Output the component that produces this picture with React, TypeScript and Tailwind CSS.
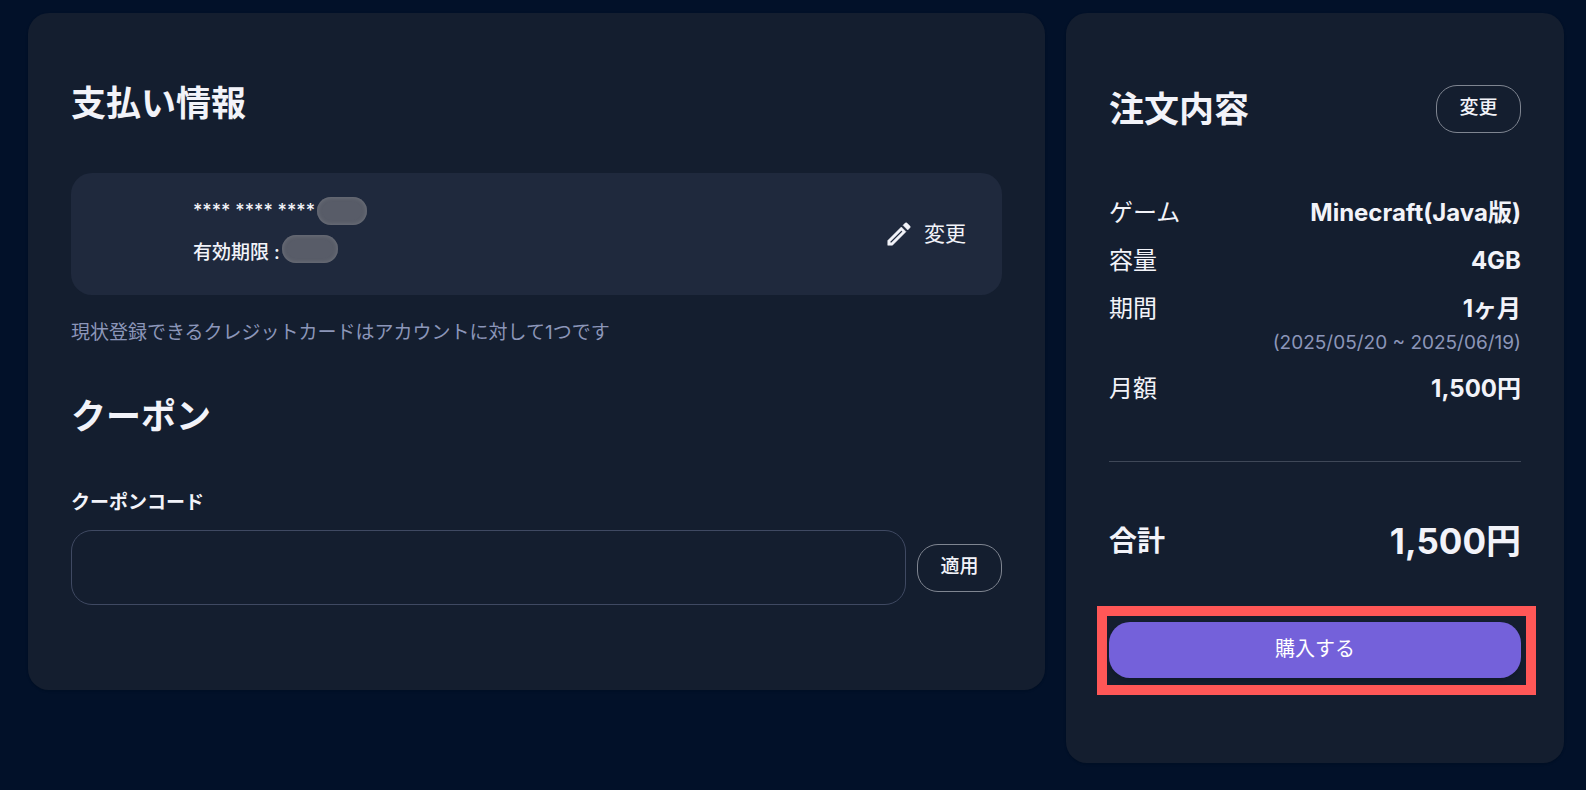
import React from 'react';

interface OrderLine {
  label: string;
  value: string;
  note?: string;
}

const ORDER_LINES: OrderLine[] = [
  { label: 'ゲーム', value: 'Minecraft(Java版)' },
  { label: '容量', value: '4GB' },
  { label: '期間', value: '1ヶ月', note: '(2025/05/20 ~ 2025/06/19)' },
  { label: '月額', value: '1,500円' },
];

function PencilIcon() {
  return (
    <svg
      viewBox="0 0 24 24"
      aria-hidden="true"
      className="size-[30px]"
      fill="currentColor"
      stroke="currentColor"
      strokeWidth="0.4"
    >
      <path d="M3 17.25V21h3.75L17.6 10.15 13.85 6.4 3 17.25ZM5.92 19H5v-.92l8.85-8.85.92.92L5.92 19Z" />
      <path d="M20.71 5.63 18.37 3.29a1 1 0 0 0-1.41 0l-1.75 1.75 3.75 3.75 1.75-1.75a1 1 0 0 0 0-1.41Z" />
    </svg>
  );
}

function OutlineButton({ children }: { children: React.ReactNode }) {
  return (
    <button
      type="button"
      className="h-12 min-w-[85px] shrink-0 rounded-[21px] border border-[#7f8591] px-5 pb-0.5 text-[19px] leading-6 font-medium"
    >
      {children}
    </button>
  );
}

/** Grey pill that hides the sensitive digits. */
function Redacted({ className }: { className: string }) {
  return (
    <span
      aria-hidden="true"
      className={`h-7 rounded-[14px] bg-[#585c68] shadow-[inset_0_0_4px_#74777f] ${className}`}
    />
  );
}

function PaymentPanel() {
  return (
    <section className="min-w-0 flex-1 rounded-[21px] bg-[#141e2f] px-[43px] pt-[64px] pb-[85px] shadow-sm">
      <h2 className="text-[35px] leading-[52px] font-bold">支払い情報</h2>

      {/* Registered card */}
      <div className="mt-11 flex h-[122px] items-center justify-between rounded-[21px] bg-[#1f293d] pr-9 pl-[122px]">
        <div className="mb-1 flex flex-col gap-2.5 font-medium">
          <p className="flex items-start gap-0.5 text-lg leading-7">
            **** **** ****
            <Redacted className="w-[50px]" />
          </p>
          <p className="flex items-start gap-0.5 text-[19px] leading-7">
            <span className="pt-1">有効期限 :</span>
            <Redacted className="w-14" />
          </p>
        </div>
        <button type="button" className="flex items-center gap-2.5 text-[21px] leading-7">
          <PencilIcon />
          変更
        </button>
      </div>
      <p className="mt-[22px] text-[19px] leading-8 text-[#8c96b9]">
        現状登録できるクレジットカードはアカウントに対して1つです
      </p>

      <h2 className="mt-[41px] text-[35px] leading-[52px] font-bold">クーポン</h2>
      <label htmlFor="coupon" className="mt-[45px] block text-[19px] leading-8 font-bold">
        クーポンコード
      </label>
      <div className="mt-[11px] flex items-center gap-[11px]">
        <input
          id="coupon"
          type="text"
          className="h-[75px] min-w-0 flex-1 rounded-[21px] border border-[#3f4962] bg-transparent px-5 text-[19px] outline-none"
        />
        <OutlineButton>適用</OutlineButton>
      </div>
    </section>
  );
}

function OrderPanel() {
  return (
    <section className="w-[498px] shrink-0 rounded-[21px] bg-[#141e2f] px-[43px] pt-[72px] pb-[68px] shadow-sm">
      <div className="flex items-center justify-between">
        <h2 className="text-[35px] leading-[48px] font-bold">注文内容</h2>
        <OutlineButton>変更</OutlineButton>
      </div>

      <dl className="mt-[62px] flex flex-col gap-3 text-2xl leading-9">
        {ORDER_LINES.map((line) => (
          <div key={line.label} className="flex justify-between">
            <dt>{line.label}</dt>
            <dd className="text-right font-bold">
              {line.value}
              {line.note && (
                <span className="block text-[19px] leading-8 font-normal text-[#8c96b9]">{line.note}</span>
              )}
            </dd>
          </div>
        ))}
      </dl>

      <hr className="mt-[54px] border-[#3f4858]" />

      <div className="mt-[53px] flex items-center justify-between font-bold">
        <span className="text-[28px] leading-[52px]">合計</span>
        <span className="text-[35px] leading-[52px]">1,500円</span>
      </div>

      {/* Highlight frame round the purchase button */}
      <div className="mt-[39px] -mr-[15px] -ml-3 border-10 border-[#ff5757] pt-1.5 pr-[5px] pb-[7px] pl-0.5">
        <button
          type="button"
          className="block h-14 w-full rounded-[21px] bg-[#7461da] pb-0.5 text-xl text-white shadow-md"
        >
          購入する
        </button>
      </div>
    </section>
  );
}

export default function App() {
  return (
    <main
      lang="ja"
      className="flex min-h-screen items-start gap-[21px] bg-[#021129] pt-[13px] pr-[22px] pb-[27px] pl-7 font-['Inter','Noto_Sans_CJK_JP',sans-serif] text-[#f2f3f9]"
    >
      <PaymentPanel />
      <OrderPanel />
    </main>
  );
}
